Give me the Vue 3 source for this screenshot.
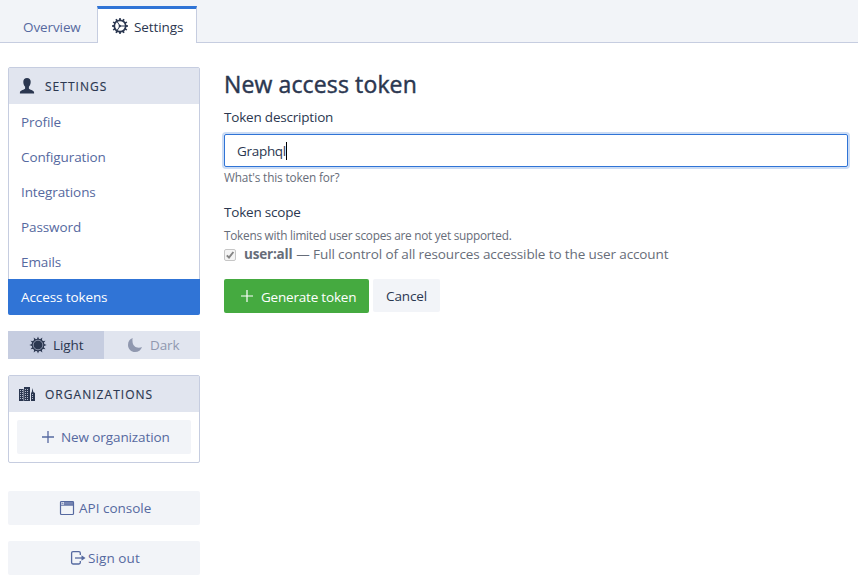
<script setup>
import { ref } from 'vue'

const items = ['Profile', 'Configuration', 'Integrations', 'Password', 'Emails', 'Access tokens']
const active = ref('Access tokens')
const description = ref('Graphql')
const rays = Array.from({ length: 12 }, (_, i) => i * 30)
</script>

<template>
  <div class="page">
    <nav class="tabs">
      <a class="tab overview">Overview</a>
      <a class="tab current">
        <svg class="gear" width="16" height="16" viewBox="0 0 16 16">
          <circle cx="8" cy="8" r="5.700" fill="none" stroke="currentColor" stroke-width="1.700" />
          <path v-for="r in rays" :key="r" :transform="`rotate(${r} 8 8)`" d="M7 2 7.300 0h1.400l.3 2z" fill="currentColor" />
          <path d="M8.600 8H14M8 8 5 3.400M8 8l-3 4.600" stroke="currentColor" stroke-width="1" fill="none" />
          <circle cx="7.800" cy="8" r="1.200" fill="currentColor" />
        </svg>
        <span>Settings</span>
      </a>
    </nav>

    <div class="body">
      <aside class="side">
        <section class="card">
          <header class="head">
            <svg width="16" height="16" viewBox="0 0 16 16" fill="currentColor">
              <path d="M8 0C5.700 0 4.300 1.500 4.300 3.800c0 2 .6 3.900 1.800 5v1.800c-.5 1.200-4.900 1.500-5.200 3.900V15.500h14.200v-1c-.3-2.400-4.700-2.700-5.200-3.900V8.800c1.200-1.100 1.800-3 1.800-5C11.700 1.500 10.300 0 8 0z" />
            </svg>
            <span class="caps">SETTINGS</span>
          </header>
          <a v-for="item in items" :key="item" class="item" :class="{ active: item === active }" @click="active = item"><span>{{ item }}</span></a>
        </section>

        <div class="theme">
          <button class="mode on">
            <svg width="18" height="18" viewBox="0 0 18 18" fill="currentColor">
              <circle cx="9" cy="9" r="6.300" />
              <path v-for="r in rays" :key="r" :transform="`rotate(${r} 9 9)`" d="M7.800 3.400 9 .4l1.200 3z" />
              <circle cx="9" cy="9" r="4.800" fill="none" stroke="#c6cde0" stroke-width=".6" />
            </svg>
            <span>Light</span>
          </button>
          <button class="mode off">
            <svg width="16" height="16" viewBox="0 0 16 16" fill="currentColor">
              <path d="M5.800 1.100C2.700 2.100 1 4.700 1 7.900 1 12 4.200 15 8.100 15c3.300 0 6-2 6.900-5-1 .5-2 .7-3.100.7-3.900 0-6.400-2.900-6.400-6.500 0-1.100-.2-2.200.3-3.100z" />
            </svg>
            <span>Dark</span>
          </button>
        </div>

        <section class="card orgs">
          <header class="head">
            <svg width="16" height="16" viewBox="0 0 16 16">
              <path d="M0 3h5v12H0zM5 1h6v14H5zM12 7l.8-1 .7-4 .8 4 1.700 1v8h-4z" fill="currentColor" />
              <path d="M1 4h1v1H1zM3 4h1v1H3zM1 6h1v1H1zM3 6h1v1H3zM1 8h1v1H1zM3 8h1v1H3zM1 10h1v1H1zM3 10h1v1H3zM1 12h1v1H1zM3 12h1v1H3zM6 3h1v1H6zM8 3h1v1H8zM6 5h1v1H6zM8 5h1v1H8zM6 7h1v1H6zM8 7h1v1H8zM6 9h1v1H6zM8 9h1v1H8zM6 11h1v1H6zM8 11h1v1H8zM6 13h1v1H6zM8 13h1v1H8zM13 8h1v1h-1zM13 10h1v1h-1zM13 12h1v1h-1z" fill="#b3bacb" />
              <path d="M4.700 3v12" stroke="#e1e5ef" stroke-width=".5" />
            </svg>
            <span class="caps">ORGANIZATIONS</span>
          </header>
          <button class="btn new-org">
            <svg width="14" height="14" viewBox="0 0 14 14"><path d="M7 1v12M1 7h12" stroke="currentColor" stroke-width="1.300" /></svg>
            <span>New organization</span>
          </button>
        </section>

        <button class="btn api">
          <svg width="16" height="16" viewBox="0 0 16 16">
            <rect x="1.500" y="1.500" width="13" height="13" rx="1" fill="none" stroke="currentColor" stroke-width="1.200" />
            <path d="M2 5.200h12" stroke="currentColor" stroke-width="1" />
            <path d="M5 1h9.500v4H5z" fill="currentColor" opacity=".8" />
            <path d="M2.500 3.200h2" stroke="currentColor" />
          </svg>
          <span>API console</span>
        </button>
        <button class="btn out">
          <svg width="16" height="16" viewBox="0 0 16 16" fill="none" stroke="currentColor" stroke-width="1.300">
            <path d="M10.300 5V3q0-1.400-1.400-1.400H3Q1.600 1.600 1.600 3v9.600Q1.600 14 3 14h5.900q1.400 0 1.400-1.400V11" />
            <path d="M5 8h8" />
            <path d="M11.500 5.200 15.500 8l-4 2.800z" fill="currentColor" stroke="none" />
          </svg>
          <span>Sign out</span>
        </button>
      </aside>

      <main class="main">
        <h2><span>New access token</span></h2>
        <label class="label desc"><span>Token description</span></label>
        <div class="field"><span>{{ description }}</span><i class="caret"></i></div>
        <p class="small hint"><span>What's this token for?</span></p>
        <label class="label scope"><span>Token scope</span></label>
        <p class="small limited"><span>Tokens with limited user scopes are not yet supported.</span></p>
        <div class="check">
          <svg width="12" height="12" viewBox="0 0 12 12">
            <rect x=".5" y=".5" width="11" height="11" rx="1.500" fill="#f4f4f4" stroke="#c6c6c6" />
            <path d="M2.800 6.300 5 8.500 9.400 3" fill="none" stroke="#858585" stroke-width="1.900" />
          </svg>
          <strong>user:all</strong>
          <span class="explain">— Full control of all resources accessible to the user account</span>
        </div>
        <div class="actions">
          <button class="btn generate">
            <svg width="14" height="14" viewBox="0 0 14 14"><path d="M7 1v12M1 7h12" stroke="currentColor" stroke-width="1.200" /></svg>
            <span>Generate token</span>
          </button>
          <button class="btn cancel"><span>Cancel</span></button>
        </div>
      </main>
    </div>
  </div>
</template>

<style>
body { background: #fff; }
</style>

<style scoped>
.page { height: 584px; overflow: hidden; font-family: "Open Sans", "Noto Sans", sans-serif; font-size: 13.5px; line-height: 20px; color: #2b3750; letter-spacing: -0.1px; }
.page, .page * { box-sizing: border-box; }
svg { display: block; flex: none; }
button { font: inherit; letter-spacing: inherit; border: 0; margin: 0; padding: 0; color: inherit; white-space: nowrap; }
h2, p { margin: 0; white-space: nowrap; }
.tabs { display: flex; align-items: flex-end; height: 43px; background: #f2f4f8; box-shadow: inset 0 -1px #c6cde0; }
.tab { display: flex; align-items: center; }
.overview { width: 97px; height: 37px; padding: 4px 0 0 23px; color: #5669a0; }
.current { width: 100px; height: 37px; padding: 2px 0 0 14px; gap: 6px; background: #fff; border: solid #c6cde0; border-width: 3px 1px 0; border-top-color: #3074d6; }
.current svg { margin-bottom: 2px; }
.current span { margin-bottom: 1px; }
.body { display: flex; gap: 24px; padding: 24px 10px 0 8px; }
.side { width: 192px; flex: none; }
.card { border: 1px solid #c6cde0; border-radius: 2px; }
.head { display: flex; align-items: center; height: 36px; padding-left: 10px; gap: 10px; background: #e1e5ef; }
.caps { font-size: 12px; letter-spacing: 1.03px; padding-top: 1px; -webkit-text-stroke: .15px currentColor; }
.item { display: flex; align-items: center; height: 35px; padding: 1px 0 0 12px; color: #5669a0; }
.item.active { height: 36px; margin: 0 -1px -1px; padding: 0 0 1px 13px; background: #3074d6; color: #fff; border-radius: 0 0 2px 2px; }
.theme { display: flex; margin-top: 16px; height: 28px; }
.mode { display: flex; align-items: center; width: 96px; background: #c6cde0; }
.on { padding-left: 21px; gap: 6px; }
.off { padding-left: 23px; gap: 7px; background: #e1e5ef; color: #9098af; }
.orgs { margin-top: 16px; height: 88px; }
.btn { display: flex; align-items: center; height: 34px; background: #f2f4f8; border-radius: 2px; color: #5669a0; }
.new-org { margin: 8px 0 0 8px; width: 174px; padding-left: 24px; gap: 6px; }
.api { margin-top: 28px; width: 192px; padding-left: 51px; gap: 4px; letter-spacing: 0; }
.out { margin-top: 16px; width: 192px; padding-left: 62px; gap: 2px; letter-spacing: .08px; }
.main { flex: 1; min-width: 0; }
h2 { font-size: 23px; font-weight: 500; line-height: 30px; padding-top: 2px; padding-bottom: 1px; letter-spacing: .13px; -webkit-text-stroke: .45px currentColor; }
.label { display: block; height: 20px; white-space: nowrap; letter-spacing: -.2px; }
.desc { margin-top: 7px; }
.field { display: flex; align-items: center; height: 33px; margin-top: 7px; padding: 0 0 0 12px; border: 1px solid #3074d6; border-radius: 2px; box-shadow: 0 0 0 2px #cbdcf5; letter-spacing: -.3px; }
.caret { width: 1px; height: 18px; background: #000; }
.small { font-size: 11.8px; line-height: 16px; color: #676d79; letter-spacing: -.25px; }
.hint { margin-top: 2px; letter-spacing: -.15px; }
.scope { margin-top: 17px; }
.limited { margin-top: 5px; }
.check { display: flex; align-items: center; height: 20px; margin-top: 1px; color: #676d79; white-space: nowrap; letter-spacing: -.115px; }
.check svg { margin-top: 2px; }
.check strong { margin-left: 8px; font-weight: 700; letter-spacing: -.2px; }
.explain { margin-left: 4px; }
.actions { display: flex; gap: 4px; margin-top: 15px; }
.generate { width: 145px; padding: 2px 0 0 16px; gap: 7px; background: #45aa40; color: #fff; letter-spacing: -.2px; }
.generate svg { margin-bottom: 2px; }
.cancel { width: 67px; height: 33px; padding-left: 13px; color: #2b3750; }
</style>
